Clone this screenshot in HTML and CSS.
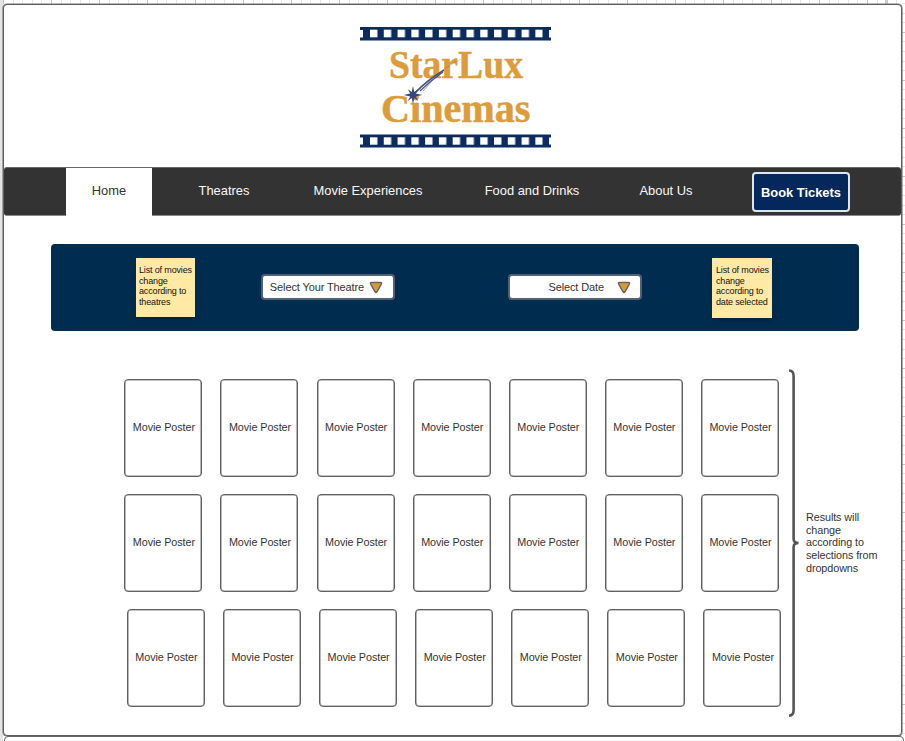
FILE: index.html
```html
<!DOCTYPE html>
<html lang="en">
<head>
<meta charset="utf-8">
<title>StarLux Cinemas</title>
<link rel="stylesheet" href="styles.css">
</head>
<body>
<div class="canvas">
<main class="frame">
  <header class="brand">
    <svg class="logo" width="200" height="130" viewBox="355 22 200 130" role="img" aria-label="StarLux Cinemas">
      <defs>
        <pattern id="film" x="370" y="0" width="13.78" height="200" patternUnits="userSpaceOnUse">
          <rect x="0" y="29.7" width="7.4" height="7.6" fill="#fff"/>
          <rect x="0" y="137.3" width="7.4" height="7.4" fill="#fff"/>
        </pattern>
      </defs>
      <path fill="#0d2b60" d="M360 27H551V30H549V37.500H551V40.500H360V37.500H363V30H360ZM360 134.500H551V137.500H549V144.500H551V147.500H360V144.500H363V137.500H360Z"/>
      <rect x="370" y="27" width="172.800" height="121" fill="url(#film)"/>
      <g class="logo-text">
        <text x="389" y="78" textLength="134" lengthAdjust="spacingAndGlyphs">StarLux</text>
        <text x="381" y="121.500" textLength="149.500" lengthAdjust="spacingAndGlyphs">Cinemas</text>
      </g>
      <g fill="none" stroke="#46527f">
        <path stroke-width="1.500" d="M414 94 Q426 81 444 70"/>
        <path stroke-width="1.200" d="M420 91 Q430 81 443 72"/>
        <path stroke-width=".6" d="M423 91 Q432 80 444 70"/>
        <path stroke-width=".5" opacity=".5" d="M442 71 Q450 65 461 59"/>
      </g>
      <path fill="#38477b" d="M413 86l1.300 6 4-3-2.500 4.500 6.500 1.500-6.500 1.500 2.500 4.500-4-3-1.300 6-1.300-6-4 3 2.500-4.500-6.500-1.500 6.500-1.500-2.500-4.500 4 3z"/>
    </svg>
  </header>
  <nav class="nav">
    <a class="home">Home</a>
    <a class="theatres">Theatres</a>
    <a class="experiences">Movie Experiences</a>
    <a class="food">Food and Drinks</a>
    <a class="about">About Us</a>
    <a class="book">Book Tickets</a>
  </nav>
  <section class="filters">
    <aside class="note">List of movies<br>change<br>according to<br>theatres</aside>
    <div class="select theatre-select"><span>Select Your Theatre</span><svg width="14" height="13" viewBox="0 0 14 13"><path d="M2.300 1.500H11.700Q13 1.500 12.400 2.800L8 10.800Q7 12 6 10.800L1.600 2.800Q1 1.500 2.300 1.500Z"/></svg></div>
    <div class="select date-select"><span>Select Date</span><svg width="14" height="13" viewBox="0 0 14 13"><path d="M2.300 1.500H11.700Q13 1.500 12.400 2.800L8 10.800Q7 12 6 10.800L1.600 2.800Q1 1.500 2.300 1.500Z"/></svg></div>
    <aside class="note date-note">List of movies<br>change<br>according to<br>date selected</aside>
  </section>
  <section class="results">
    <div class="posters">
      <div class="row"><div class="poster">Movie Poster</div><div class="poster">Movie Poster</div><div class="poster">Movie Poster</div><div class="poster">Movie Poster</div><div class="poster">Movie Poster</div><div class="poster">Movie Poster</div><div class="poster">Movie Poster</div></div>
      <div class="row"><div class="poster">Movie Poster</div><div class="poster">Movie Poster</div><div class="poster">Movie Poster</div><div class="poster">Movie Poster</div><div class="poster">Movie Poster</div><div class="poster">Movie Poster</div><div class="poster">Movie Poster</div></div>
      <div class="row shifted"><div class="poster">Movie Poster</div><div class="poster">Movie Poster</div><div class="poster">Movie Poster</div><div class="poster">Movie Poster</div><div class="poster">Movie Poster</div><div class="poster">Movie Poster</div><div class="poster">Movie Poster</div></div>
    </div>
    <svg class="brace" width="12" height="349" viewBox="788 369 12 349"><path d="M789 370.500Q793.600 370.500 793.600 376V539Q793.600 543 798.500 543Q793.600 543 793.600 547V710Q793.600 715.700 789 715.700"/></svg>
    <p class="hint">Results will<br>change<br>according to<br>selections from<br>dropdowns</p>
  </section>
</main>
<div class="next-frame"></div>
</div>
</body>
</html>
```
FILE: styles.css
```css
* { box-sizing: border-box; }
body {
  margin: 0;
  font-family: "Liberation Sans", Arial, sans-serif;
  color: #333;
  background: #fff;
}
.canvas {
  width: 905px;
  height: 741px;
  overflow: hidden;
  padding: 4px 3px 0;
  background:
    linear-gradient(#e4e4e4, #e4e4e4) 0 0 / 3px 741px no-repeat,
    linear-gradient(#ccc, #ccc) 885px 0 / 3px 4px no-repeat,
    repeating-linear-gradient(90deg, #c6c6c6 0 1px, transparent 1px 48px) 3px 0 / 902px 4px no-repeat,
    repeating-linear-gradient(90deg, #e4e4e4 0 1px, transparent 1px 9.6px) 3px 0 / 902px 4px no-repeat,
    repeating-linear-gradient(#c8c8c8 0 1px, transparent 1px 48px) 902px 32px / 3px 709px no-repeat,
    repeating-linear-gradient(#e2e2e2 0 1px, transparent 1px 9.6px) 902px 3px / 3px 738px no-repeat,
    #fff;
}
.frame {
  width: 899px;
  height: 732px;
  border: 1px solid #5e5e5e;
  border-radius: 4px;
  box-shadow: 0 0 0 .6px #777;
  background: #fff;
}
.brand {
  height: 162px;
  padding-top: 17px;
  display: flex;
  justify-content: center;
}
.logo { margin-left: 5px; }
.logo-text {
  font: bold 39px "Liberation Serif", serif;
  fill: #dc9c3b;
  stroke: #dc9c3b;
  stroke-width: .5px;
}
.nav {
  height: 49px;
  border-top: 1px solid #666;
  border-bottom: 1px solid #888;
  border-radius: 3px;
  background: #333;
  display: grid;
  grid-template-columns: 62px 86px 144px 144px 184px 84px 44px 98px 1fr;
  font-size: 12.9px;
  line-height: 46px;
  color: #f8f8f8;
  text-align: center;
}
.nav a { white-space: nowrap; }
.home { grid-column: 2; background: #fff; color: #333; }
.book {
  grid-column: 8;
  margin: 4px 0;
  height: 40px;
  border: 2px solid #dfe6ee;
  border-radius: 4px;
  background: #04285c;
  color: #fff;
  font-weight: bold;
  line-height: 38px;
}
.filters {
  margin: 28px 0 0 47px;
  width: 808px;
  height: 87px;
  border-radius: 4px;
  background: #002c50;
  display: flex;
  align-items: flex-start;
  padding: 14px 0 0 85px;
}
.note {
  width: 59px;
  height: 59px;
  padding: 7px 0 0 3px;
  background: #ffe9a5;
  color: #111;
  font-size: 9px;
  letter-spacing: -.15px;
  line-height: 10.6px;
  white-space: nowrap;
  box-shadow: 0 3px 4px -2px #001a30;
}
.date-note { margin-left: 70px; width: 60px; height: 60px; padding-left: 4px; }
.select {
  width: 134px;
  height: 26px;
  margin: 16px 0 0 66px;
  border: 2px solid #526272;
  border-radius: 4px;
  background: #fff;
  display: flex;
  align-items: center;
  justify-content: flex-end;
  gap: 5px;
  padding-right: 10px;
  font-size: 11px;
  letter-spacing: -.12px;
  line-height: 20px;
  white-space: nowrap;
}
.date-select { margin-left: 113px; padding-right: 9px; gap: 13px; }
.select svg path { fill: #d99a35; stroke: #666; stroke-width: 1.5px; }
.results {
  display: flex;
  align-items: flex-start;
  padding: 38px 0 0 120px;
}
.posters {
  width: 664px;
  padding-top: 9.5px;
  display: flex;
  flex-direction: column;
  gap: 17.2px;
}
.row { display: flex; gap: 18.1px; padding-left: .4px; }
.shifted { margin-left: 2.5px; }
.poster {
  flex: none;
  width: 78px;
  height: 98px;
  padding: 0 0 2px 1px;
  border: 1px solid #606060;
  border-radius: 4px;
  box-shadow: inset 0 0 0 .6px #888;
  display: flex;
  align-items: center;
  justify-content: center;
  font-size: 10.8px;
  letter-spacing: -.08px;
  white-space: nowrap;
}
.brace { flex: none; }
.brace path { fill: none; stroke: #555; stroke-width: 2.6px; }
.hint {
  margin: 142px 0 0 6px;
  font-size: 10.8px;
  letter-spacing: -.08px;
  line-height: 12.7px;
  white-space: nowrap;
}
.next-frame {
  width: 900px;
  height: 20px;
  margin-left: 1px;
  border: 1px solid #666;
  border-radius: 4px;
  background: #fff;
}
```
